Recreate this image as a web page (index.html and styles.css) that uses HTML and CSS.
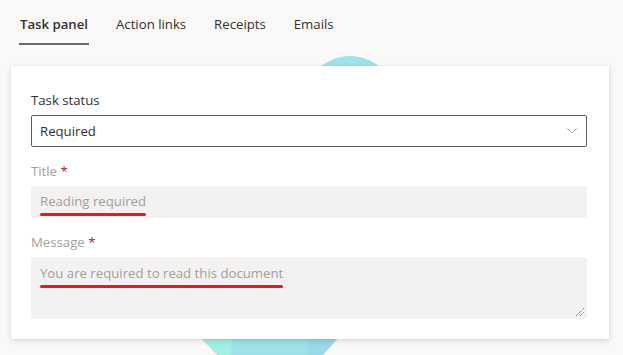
FILE: index.html
```html
<!DOCTYPE html>
<html lang="en">
<head>
  <meta charset="UTF-8" />
  <meta name="viewport" content="width=device-width, initial-scale=1" />
  <title>Task panel</title>
  <link rel="stylesheet" href="styles.css">
</head>
<body>

  <div class="deco-circle"></div>
  <div class="deco-base"></div>

  <nav class="tabs">
    <span class="tab active">Task panel</span>
    <span class="tab">Action links</span>
    <span class="tab">Receipts</span>
    <span class="tab">Emails</span>
  </nav>

  <div class="card">
    <div class="field">
      <label class="label">Task status</label>
      <div class="dropdown">
        <span>Required</span>
        <svg class="chevron" width="10" height="6" viewBox="0 0 10 6">
          <path d="M0.5 0.5 L5 5 L9.5 0.5" fill="none" stroke="#a19f9d" stroke-width="1" />
        </svg>
      </div>
    </div>

    <div class="field">
      <label class="label disabled">Title <span class="req">*</span></label>
      <div class="input">
        <span class="mark">Reading required</span>
      </div>
    </div>

    <div class="field">
      <label class="label disabled">Message <span class="req">*</span></label>
      <div class="input textarea">
        <span class="mark">You are required to read this document</span>
        <svg class="grip" width="10" height="10" viewBox="0 0 10 10">
          <path d="M1 9 L9 1 M5 9 L9 5" stroke="#605e5c" stroke-width="1" stroke-dasharray="1 1" />
        </svg>
      </div>
    </div>
  </div>

</body>
</html>
```

FILE: styles.css
```css
html {
  overflow: hidden;
}
body {
  margin: 0;
  padding: 0 14px 0 11px;
  background: #faf9f8;
  color: #323130;
  font-family: "Open Sans", "Noto Sans", sans-serif;
  font-size: 13.2px;
  position: relative;
  height: 355px;
  overflow: hidden;
}
.deco-circle {
  position: absolute;
  top: 56px;
  left: 304px;
  width: 92px;
  height: 92px;
  border-radius: 50%;
  background: #9ee3eb;
}
.deco-base {
  position: absolute;
  top: 336px;
  left: 199px;
  width: 141px;
  height: 19px;
  background: linear-gradient(90deg, #a2efe4 0%, #a2efe4 22%, #9de1e9 24%, #9de1e9 76%, #9ad9e9 78%);
  clip-path: polygon(0 0, 100% 0, calc(100% - 17px) 100%, 18px 100%);
}
.tabs {
  display: flex;
  gap: 12px;
  padding-left: 1px;
  height: 47px;
}
.tab {
  position: relative;
  padding: 14px 8px 0;
  line-height: 20px;
}
.tab.active {
  font-weight: 600;
}
.tab.active::after {
  content: "";
  position: absolute;
  left: 7px;
  right: 7px;
  top: 43px;
  height: 2px;
  background: #6b6b6b;
}
.card {
  position: relative;
  z-index: 1;
  margin-top: 19px;
  background: #fff;
  padding: 19px 22px 20px 20px;
  box-shadow: 0 2px 6px rgba(0, 0, 0, 0.13), 0 0 1px rgba(0, 0, 0, 0.1);
}
.field + .field {
  margin-top: 9px;
}
.label {
  display: block;
  padding: 5px 0;
  line-height: 20px;
  font-weight: 500;
}
.label.disabled {
  color: #a19f9d;
}
.req {
  color: #a4262c;
}
.dropdown {
  display: flex;
  align-items: center;
  justify-content: space-between;
  height: 32px;
  box-sizing: border-box;
  border: 1px solid #605e5c;
  border-radius: 2px;
  padding: 0 9px 0 8px;
}
.input {
  position: relative;
  height: 32px;
  box-sizing: border-box;
  padding: 5px 9px 0;
  line-height: 20px;
  background: #f3f2f1;
  border-radius: 2px;
  color: #a19f9d;
}
.input.textarea {
  height: 62px;
  padding-top: 6px;
}
.mark {
  position: relative;
}
.mark::after {
  content: "";
  position: absolute;
  left: 0;
  right: 0;
  bottom: -6px;
  height: 3px;
  border-radius: 2px;
  background: #e31b23;
}
.grip {
  position: absolute;
  right: 2px;
  bottom: 2px;
}
```
